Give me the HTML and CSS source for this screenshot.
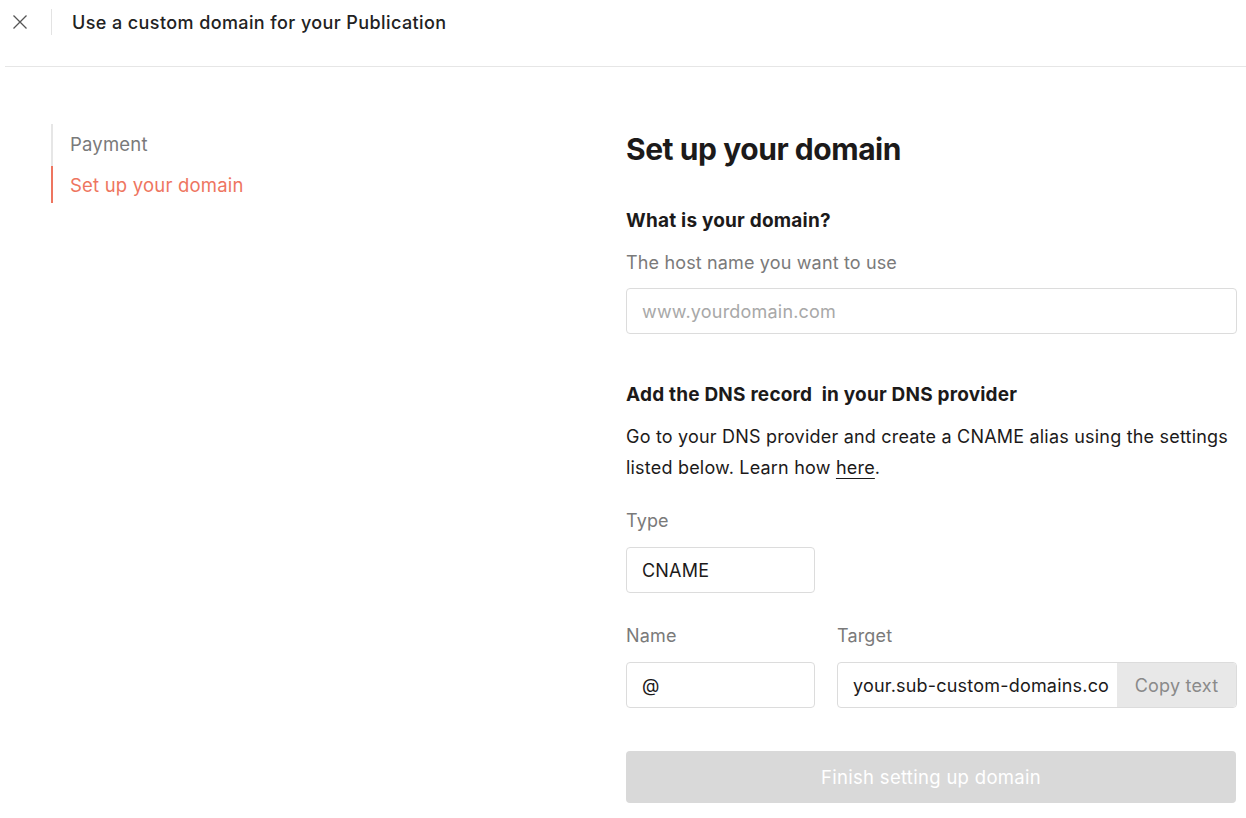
FILE: index.html
```html
<!DOCTYPE html>
<html>
<head>
<meta charset="utf-8">
<link rel="stylesheet" href="styles.css">
</head>
<body>
<header class="topbar">
  <button class="close" aria-label="Close">
    <svg width="16" height="16" viewBox="0 0 16 16"><path d="M1.5 1.5 L14.5 14.5 M14.5 1.5 L1.5 14.5" stroke="#555" stroke-width="1.3" fill="none"/></svg>
  </button>
  <span class="divider"></span>
  <h1 class="title">Use a custom domain for your Publication</h1>
</header>
<div class="layout">
  <nav class="steps">
    <div class="step">Payment</div>
    <div class="step active">Set up your domain</div>
  </nav>
  <main class="main">
    <h2 class="heading">Set up your domain</h2>
    <h3 class="subhead">What is your domain?</h3>
    <p class="hint">The host name you want to use</p>
    <div class="field full"><span class="placeholder">www.yourdomain.com</span></div>

    <h3 class="subhead dns">Add the DNS record&nbsp; in your DNS provider</h3>
    <p class="text">Go to your DNS provider and create a CNAME alias using the settings listed below. Learn how <a href="#">here</a>.</p>

    <div class="label type-label">Type</div>
    <div class="field small">CNAME</div>

    <div class="row">
      <div class="col">
        <div class="label">Name</div>
        <div class="field small">@</div>
      </div>
      <div class="col grow">
        <div class="label">Target</div>
        <div class="field target">
          <span class="target-value">your.sub-custom-domains.co</span>
          <span class="copy">Copy text</span>
        </div>
      </div>
    </div>

    <button class="finish">Finish setting up domain</button>
  </main>
</div>
</body>
</html>
```
FILE: styles.css
```css
* { box-sizing: border-box; }
body {
  margin: 0;
  background: #fff;
  font-family: Inter, "Noto Sans", sans-serif;
  color: #1a1a1a;
  width: 1246px;
  height: 818px;
  overflow: hidden;
}
.topbar {
  display: flex;
  align-items: center;
  height: 67px;
  margin-left: 5px;
  padding-bottom: 22px;
  border-bottom: 1px solid #e6e6e6;
}
.close {
  border: 0;
  background: none;
  padding: 0;
  margin-left: 7px;
  width: 16px;
  height: 16px;
  display: flex;
}
.divider {
  width: 1px;
  height: 26px;
  background: #e3e3e3;
  margin-left: 23px;
  margin-right: 20px;
}
.title {
  margin: 0;
  font-size: 18px;
  font-weight: 500;
  letter-spacing: 0.4px;
  color: #222;
}
.layout {
  display: flex;
  padding-left: 51px;
  padding-top: 57px;
}
.steps {
  width: 575px;
  display: flex;
  flex-direction: column;
}
.step {
  border-left: 2px solid #e6e6e6;
  padding-left: 17px;
  font-size: 18.5px;
  color: #7a7a7a;
  letter-spacing: 0.2px;
  height: 42px;
  line-height: 40px;
}
.step.active {
  color: #ee7560;
  border-left-color: #ee7560;
  height: 37px;
  line-height: 38px;
}
.main {
  width: 611px;
  padding-top: 7px;
}
.heading {
  margin: 0;
  font-size: 30px;
  font-weight: 700;
  letter-spacing: -0.45px;
  color: #1c1a1a;
  line-height: 36px;
}
.subhead {
  margin: 42px 0 0;
  font-size: 19px;
  font-weight: 700;
  letter-spacing: 0.2px;
  line-height: 24px;
  color: #1c1a1a;
}
.hint {
  margin: 18px 0 0;
  font-size: 18px;
  color: #7a7a7a;
  letter-spacing: 0.15px;
  line-height: 24px;
}
.field {
  border: 1px solid #dcdcdc;
  border-radius: 4px;
  height: 46px;
  display: flex;
  align-items: center;
  padding-left: 15px;
  font-size: 18px;
  letter-spacing: 0.2px;
  color: #1c1a1a;
  background: #fff;
}
.full { margin-top: 13px; width: 611px; }
.placeholder { color: #a8a8a8; }
.subhead.dns { margin-top: 49px; }
.text {
  margin: 14px 0 0;
  font-size: 18px;
  line-height: 31px;
  letter-spacing: 0.2px;
  color: #1c1a1a;
}
.text a { color: #1c1a1a; text-decoration: underline; text-underline-offset: 4px; text-decoration-thickness: 1px; }
.label {
  font-size: 18px;
  color: #7a7a7a;
  letter-spacing: 0.15px;
  line-height: 24px;
}
.type-label { margin-top: 26px; }
.small { width: 189px; margin-top: 14px; }
.row {
  display: flex;
  gap: 22px;
  margin-top: 31px;
}
.col { display: flex; flex-direction: column; }
.col.grow { flex: 1; min-width: 0; }
.target {
  margin-top: 14px;
  padding-left: 0;
  overflow: hidden;
}
.target-value {
  flex: 1;
  padding-left: 15px;
  white-space: nowrap;
  min-width: 0;
}
.copy {
  width: 119px;
  height: 100%;
  background: #e8e8e8;
  color: #8a8a8a;
  display: flex;
  align-items: center;
  justify-content: center;
  flex-shrink: 0;
}
.finish {
  margin-top: 43px;
  width: 610px;
  height: 52px;
  border: 0;
  border-radius: 4px;
  background: #d9d9d9;
  color: #fff;
  font-family: inherit;
  font-size: 18.5px;
  letter-spacing: 0.3px;
}
```
